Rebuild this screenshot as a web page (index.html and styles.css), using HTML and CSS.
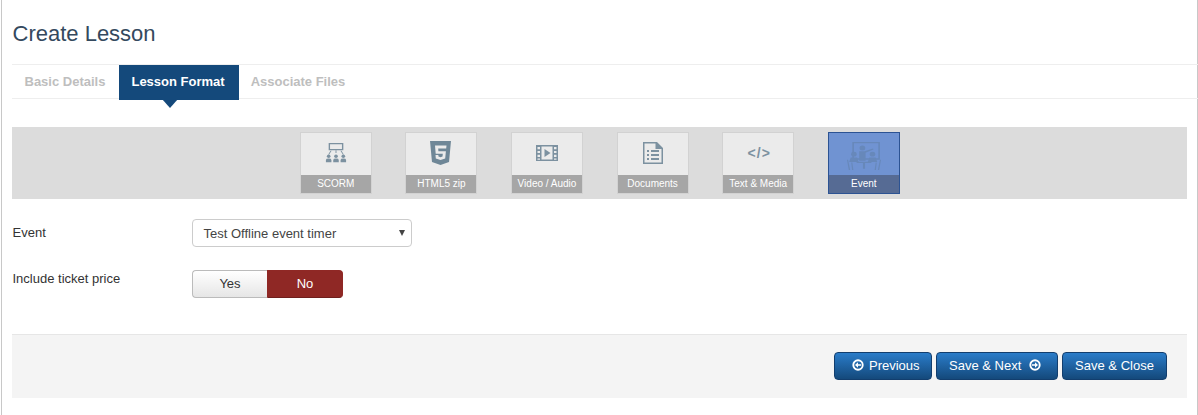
FILE: index.html
```html
<!DOCTYPE html>
<html lang="en">
<head>
<meta charset="utf-8">
<title>Create Lesson</title>
<link rel="stylesheet" href="styles.css">
</head>
<body>
<div class="page">
  <h1 class="title">Create Lesson</h1>
  <nav class="tabs">
    <a class="tab tab-basic">Basic Details</a>
    <a class="tab active">Lesson Format</a>
    <a class="tab tab-files">Associate Files</a>
  </nav>
  <section class="formats">
    <div class="card">
      <div class="card-icon">
        <svg width="22" height="22" viewBox="0 0 24 24" fill="#7c91a0">
          <path d="M4 1h16v8H4zM5.500 2.500v5h13v-5z" fill-rule="evenodd"/>
          <path d="M11.500 9h1v3h-1zM6 9.500h1.200L4.500 13.500h-1zM18 9.500h-1.200l2.700 4h1z"/>
          <circle cx="4" cy="15.500" r="2"/><circle cx="12" cy="15.500" r="2"/><circle cx="20" cy="15.500" r="2"/>
          <path d="M1 22v-2.500q0-1.500 3-1.500t3 1.500V22zM9 22v-2.500q0-1.500 3-1.500t3 1.500V22zM17 22v-2.500q0-1.500 3-1.500t3 1.500V22z"/>
        </svg>
      </div>
      <div class="card-label">SCORM</div>
    </div>
    <div class="card">
      <div class="card-icon">
        <svg width="24" height="26" viewBox="0 0 24 26">
          <path fill="#6f8797" d="M1 1h21l-2 21-8.500 3L3 22z"/>
          <path fill="#ebebeb" d="M6 5.500h11.500l-.3 3H9.200l.2 2.800h7.500l-.7 7.200-4.700 1.500-4.700-1.500-.3-3.500h2.800l.2 1.600 2 .6 2-.6.300-2.800H6.700z"/>
        </svg>
      </div>
      <div class="card-label">HTML5 zip</div>
    </div>
    <div class="card">
      <div class="card-icon">
        <svg width="22" height="18" viewBox="0 0 22 18" fill="#7c91a0">
          <path fill-rule="evenodd" d="M0 1h22v16H0zM1.500 3v2.200h2.500V3zM1.500 7v2h2.500V7zM1.500 10.800V13h2.500v-2.200zM1.500 14.500v1.200h2.500v-1.200zM18 3v2.200h2.500V3zM18 7v2h2.500V7zM18 10.800V13h2.500v-2.200zM18 14.500v1.200h2.500v-1.200zM5.500 2.500v13h11v-13z"/>
          <path d="M8.500 5l6 4-6 4z"/>
        </svg>
      </div>
      <div class="card-label">Video / Audio</div>
    </div>
    <div class="card">
      <div class="card-icon">
        <svg width="22" height="24" viewBox="0 0 22 24" fill="#7c91a0">
          <path fill-rule="evenodd" d="M1 1h14l6 6v16H1zM2.500 2.500v19h17V8h-6V2.500z"/>
          <path d="M5 9h2v2H5zM9 9h8v2H9zM5 13h2v2H5zM9 13h8v2H9zM5 17h2v2H5zM9 17h8v2H9z"/>
        </svg>
      </div>
      <div class="card-label">Documents</div>
    </div>
    <div class="card">
      <div class="card-icon code-icon">&lt;/&gt;</div>
      <div class="card-label">Text &amp; Media</div>
    </div>
    <div class="card selected">
      <div class="card-icon">
        <svg class="event-svg" width="34" height="30" viewBox="0 0 32 32" preserveAspectRatio="none" fill="#6788ba">
          <path fill-rule="evenodd" d="M5 1h26v19H5zM6.500 2.500v16h23v-16z"/>
          <circle cx="14.500" cy="7.500" r="2.700"/>
          <path d="M11.500 11h5l8-3 .4 1-7.400 3.500V21h-6z"/>
          <circle cx="6.500" cy="14" r="2.600"/><circle cx="24" cy="14" r="2.600"/>
          <path d="M3.500 17.500h6l1.500 5H2zM21 17.500h6l1.500 5h-9z"/>
          <path d="M9 22h14v1.500h-6v6h-2v-6H9z"/>
          <path d="M1 20l2 11H1.700L0 20zM5 23l1 8H4.800L4 23zM31 20l-2 11h1.300L32 20zM27 23l-1 8h1.200l.8-8z"/>
        </svg>
      </div>
      <div class="card-label">Event</div>
    </div>
  </section>
  <div class="field field-event">
    <label class="field-label">Event</label>
    <div class="select">
      <span>Test Offline event timer</span>
      <span class="caret"></span>
    </div>
  </div>
  <div class="field field-ticket">
    <label class="field-label">Include ticket price</label>
    <div class="toggle">
      <button class="toggle-btn yes">Yes</button>
      <button class="toggle-btn no">No</button>
    </div>
  </div>
  <footer class="actions">
    <button class="btn btn-prev">
      <svg class="btn-icon" viewBox="0 0 12 12"><circle cx="6" cy="6" r="4.700" fill="none" stroke="#fff" stroke-width="1.900"/><path d="M9 5.200H6V3.200L3 6l3 2.800V6.800h3z" fill="#fff"/></svg>
      Previous
    </button>
    <button class="btn btn-next">
      Save &amp; Next
      <svg class="btn-icon" viewBox="0 0 12 12"><circle cx="6" cy="6" r="4.700" fill="none" stroke="#fff" stroke-width="1.900"/><path d="M3 5.200h3V3.200L9 6 6 8.800V6.800H3z" fill="#fff"/></svg>
    </button>
    <button class="btn btn-close">Save &amp; Close</button>
  </footer>
</div>
</body>
</html>
```
FILE: styles.css
```css
* { box-sizing: border-box; }
html, body { margin: 0; padding: 0; background: #fff; }
body {
  width: 1198px;
  height: 415px;
  overflow: hidden;
  font-family: "Liberation Sans", Arial, sans-serif;
  color: #333;
}
.page {
  height: 415px;
  margin-left: 1px;
  width: 1197px;
  border-left: 1px solid #c8c8c8;
  border-right: 1px solid #c8c8c8;
  padding: 21px 10px 0 10px;
}
.title {
  margin: 0 0 18px 0.500px;
  font-size: 22px;
  line-height: 25px;
  font-weight: 400;
  color: #34495e;
}
.tabs {
  display: flex;
  height: 35px;
  width: 1187px;
  border-top: 1px solid #eee;
  border-bottom: 1px solid #eee;
}
.tab {
  position: relative;
  height: 35px;
  padding-top: 9px;
  font-size: 13px;
  line-height: 16px;
  font-weight: 700;
  color: #bebebe;
}
.tab-basic { padding-left: 12.500px; padding-right: 13.500px; }
.tab-files { padding-left: 11.500px; }
.tab.active {
  padding-left: 12.500px;
  padding-right: 14.500px;
  background: #14497b;
  color: #fff;
}
.tab.active::after {
  content: "";
  position: absolute;
  left: 43px;
  top: 34px;
  border-left: 8.500px solid transparent;
  border-right: 8.500px solid transparent;
  border-top: 9px solid #14497b;
}
.formats {
  display: flex;
  justify-content: center;
  gap: 33.600px;
  width: 1175px;
  height: 72px;
  margin-top: 28px;
  padding: 5px 0 0 0.600px;
  background: #dcdcdc;
}
.card {
  display: flex;
  flex-direction: column;
  width: 72px;
  height: 62px;
  border: 1px solid #d2d2d2;
  background: #ebebeb;
}
.card-icon {
  display: flex;
  align-items: center;
  justify-content: center;
  height: 42px;
  padding-bottom: 2px;
}
.event-svg { margin-top: 6px; }
.code-icon {
  padding-left: 2px;
  font-size: 14px;
  font-weight: 700;
  color: #7c91a0;
  letter-spacing: 1px;
}
.card-label {
  height: 18px;
  line-height: 17px;
  font-size: 10px;
  text-align: center;
  color: #fff;
  background: #a6a6a6;
}
.card.selected {
  border-color: #2c5393;
  background: #7093d2;
}
.selected .card-label { background: #566b94; }
.field { display: flex; width: 1175px; font-size: 13px; }
.field-label {
  width: 180px;
  padding-left: 0.500px;
  line-height: 16px;
  color: #333;
}
.field-event { margin-top: 20px; height: 28px; }
.field-event .field-label { padding-top: 6px; }
.select {
  display: flex;
  align-items: center;
  justify-content: space-between;
  width: 220px;
  height: 28px;
  padding: 0 6px 0 10.500px;
  border: 1px solid #ccc;
  border-radius: 4px;
  color: #444;
  background: #fff;
}
.caret {
  width: 0;
  height: 0;
  margin-top: -1px;
  border-left: 3px solid transparent;
  border-right: 3px solid transparent;
  border-top: 6px solid #444;
}
.field-ticket { margin-top: 23px; height: 28px; }
.field-ticket .field-label { padding-top: 1px; }
.toggle { display: flex; width: 151px; height: 28px; }
.toggle-btn {
  height: 28px;
  padding: 0 0 2px 0;
  font-family: inherit;
  font-size: 13px;
  border: 1px solid #bbb;
}
.toggle-btn.yes {
  width: 75px;
  color: #333;
  background: linear-gradient(#fff, #e6e6e6);
  border-right: 0;
  border-radius: 4px 0 0 4px;
}
.toggle-btn.no {
  width: 76px;
  color: #fff;
  background: #8f2825;
  border-color: #8f2825;
  border-bottom-color: #6f1f1d;
  border-radius: 0 4px 4px 0;
}
.actions {
  display: flex;
  justify-content: flex-end;
  align-items: flex-start;
  gap: 4px;
  width: 1175px;
  height: 64px;
  margin-top: 36px;
  padding: 17px 20px 0 0;
  background: #f4f4f4;
  border-top: 1px solid #e6e6e6;
}
.btn {
  display: flex;
  align-items: center;
  height: 28px;
  padding: 0 0 2px 0;
  font-family: inherit;
  font-size: 13px;
  color: #fff;
  background: linear-gradient(#2a7cc9, #14497b);
  border: 1px solid #123e6e;
  border-radius: 4px;
}
.btn-icon { width: 12px; height: 12px; }
.btn-prev { width: 98px; padding-left: 17px; gap: 5px; }
.btn-next { width: 122px; padding-left: 12px; gap: 8px; }
.btn-close { width: 105px; justify-content: center; }
```
